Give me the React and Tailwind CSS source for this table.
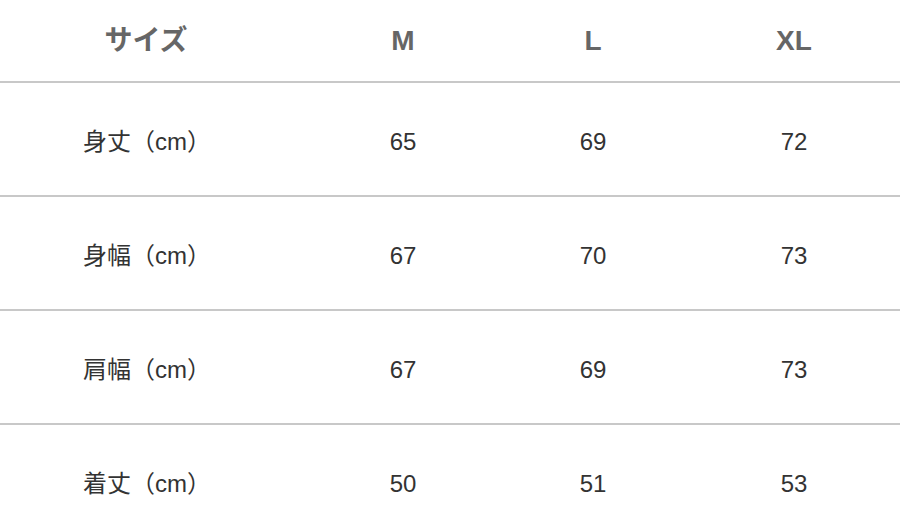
import React from 'react';

const sizes = ['M', 'L', 'XL'];

const rows = [
  { label: '身丈（cm）', values: [65, 69, 72] },
  { label: '身幅（cm）', values: [67, 70, 73] },
  { label: '肩幅（cm）', values: [67, 69, 73] },
  { label: '着丈（cm）', values: [50, 51, 53] },
];

const cols = 'grid grid-cols-[286px_234px_146px_256px]';

export default function App() {
  return (
    <div
      className="w-[900px] h-[529px] overflow-hidden bg-white"
      style={{ fontFamily: '"Liberation Sans", "Noto Sans CJK JP", sans-serif' }}
    >
      {/* ヘッダー */}
      <div className={`${cols} h-[83px] border-b-2 border-[#c8c8c8] items-center text-[28px] font-bold text-[#666]`}>
        <div className="text-center pl-[6px]">サイズ</div>
        {sizes.map((s) => (
          <div key={s} className="text-center">{s}</div>
        ))}
      </div>

      {rows.map((row) => (
        <div
          key={row.label}
          className={`${cols} h-[114px] pt-[5px] border-b-2 border-[#c8c8c8] items-center text-[24px] text-[#333]`}
        >
          <div className="text-center pl-[8px]">{row.label}</div>
          {row.values.map((v, i) => (
            <div key={i} className="text-center">{v}</div>
          ))}
        </div>
      ))}
    </div>
  );
}
